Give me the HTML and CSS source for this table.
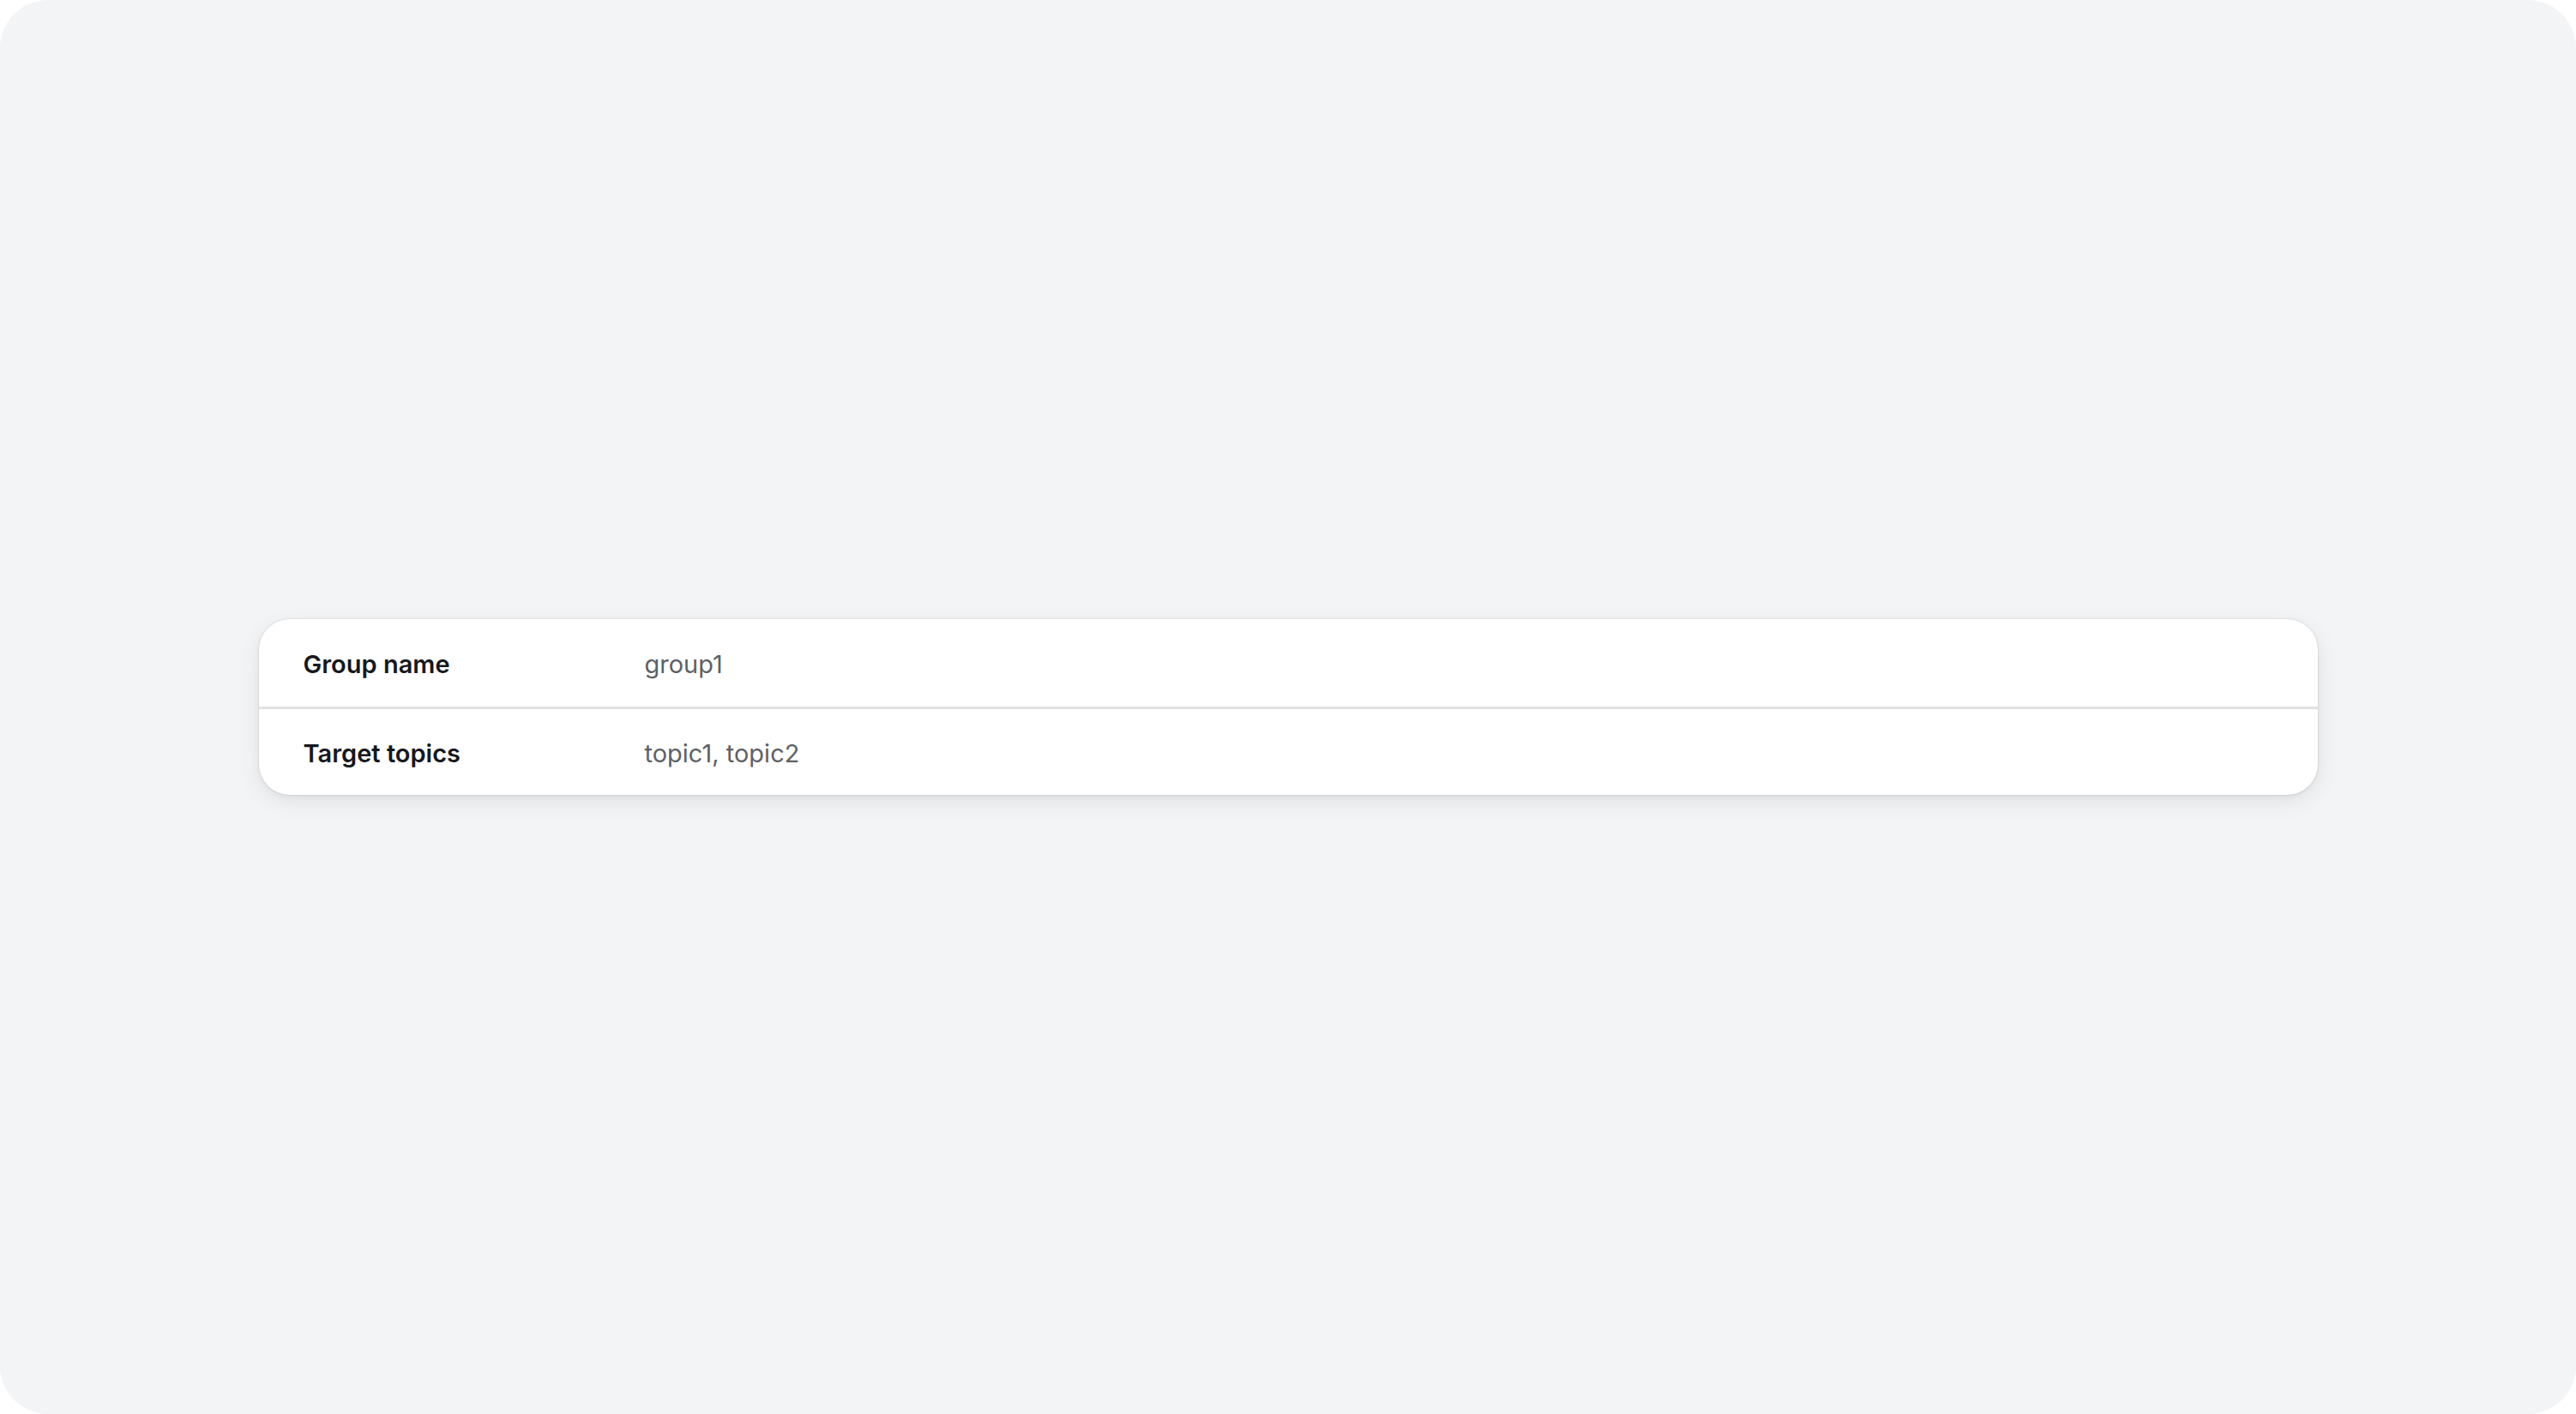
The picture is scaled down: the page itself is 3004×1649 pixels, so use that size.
FILE: index.html
```html
<!DOCTYPE html>
<html lang="en">
<head>
<meta charset="utf-8">
<title>Group details</title>
<link rel="stylesheet" href="styles.css">
</head>
<body>
<div class="page">
  <div class="card">
    <div class="row">
      <div class="label">Group name</div>
      <div class="value">group1</div>
    </div>
    <div class="row">
      <div class="label">Target topics</div>
      <div class="value">topic1, topic2</div>
    </div>
  </div>
</div>
</body>
</html>
```
FILE: styles.css
```css
html, body {
  margin: 0;
  padding: 0;
  background: #ffffff;
}
body {
  font-family: Inter, "Noto Sans", "Liberation Sans", sans-serif;
}
.page {
  width: 3004px;
  height: 1649px;
  box-sizing: border-box;
  background: #f3f4f6;
  border-radius: 56px;
  display: flex;
  align-items: center;
  justify-content: center;
}
.card {
  width: 2401px;
  background: #ffffff;
  border-radius: 36px;
  box-shadow: 0 0 0 1px rgba(0,0,0,0.05), 0 8px 28px rgba(0,0,0,0.08), 0 2px 6px rgba(0,0,0,0.05);
  overflow: hidden;
}
.row {
  display: flex;
  align-items: center;
  height: 102px;
  padding-left: 52px;
  padding-top: 2px;
  box-sizing: border-box;
}
.row + .row {
  border-top: 3px solid #e2e2e4;
  height: 103px;
}
.label {
  width: 398px;
  font-size: 29px;
  font-weight: 600;
  color: #16181d;
}
.value {
  font-size: 29px;
  font-weight: 400;
  color: #5e6166;
}
```
